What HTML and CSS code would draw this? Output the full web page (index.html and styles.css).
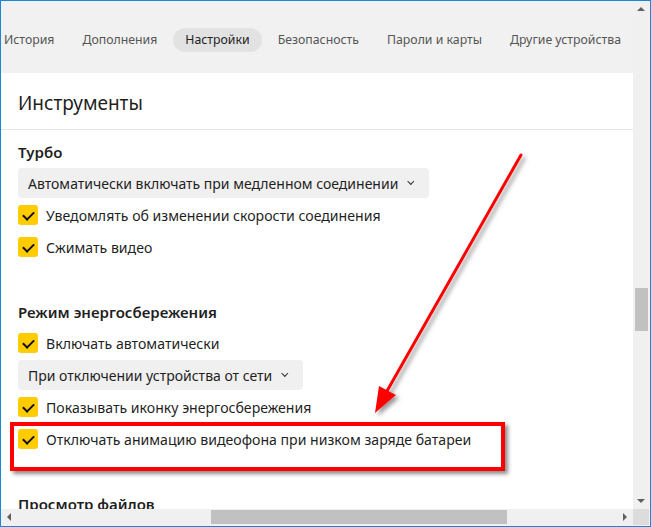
FILE: index.html
```html
<!DOCTYPE html>
<html lang="ru">

<head>
    <meta charset="UTF-8">
    <title>Настройки</title>
    <link rel="stylesheet" href="styles.css">
</head>

<body>
    <div class="window">
        <div class="viewport">
            <nav class="tabs">
                <span class="tab">История</span>
                <span class="tab">Дополнения</span>
                <span class="tab active">Настройки</span>
                <span class="tab">Безопасность</span>
                <span class="tab">Пароли и карты</span>
                <span class="tab">Другие устройства</span>
            </nav>

            <main class="panel">
                <h1 class="panel-title">Инструменты</h1>

                <!-- Turbo -->
                <section class="group">
                    <h2>Турбо</h2>
                    <div class="select">Автоматически включать при медленном соединении <span class="chev"></span></div>
                    <label class="check"><span class="box"></span>Уведомлять об изменении скорости соединения</label>
                    <label class="check"><span class="box"></span>Сжимать видео</label>
                </section>

                <!-- Power saving -->
                <section class="group">
                    <h2>Режим энергосбережения</h2>
                    <label class="check"><span class="box"></span>Включать автоматически</label>
                    <div class="select">При отключении устройства от сети <span class="chev"></span></div>
                    <label class="check"><span class="box"></span>Показывать иконку энергосбережения</label>
                    <label class="check marked"><span class="box"></span>Отключать анимацию видеофона при низком заряде батареи</label>
                </section>

                <section class="group">
                    <h2>Просмотр файлов</h2>
                </section>
            </main>

            <svg class="pointer" width="200" height="290" viewBox="0 0 200 290">
                <defs>
                    <filter id="shade" x="-20%" y="-20%" width="140%" height="140%">
                        <feDropShadow dx="3" dy="3" stdDeviation="2" flood-color="#555" flood-opacity="0.6" />
                    </filter>
                </defs>
                <g filter="url(#shade)">
                    <line x1="154" y1="11" x2="20" y2="247" stroke="#f00" stroke-width="3" stroke-linecap="round" />
                    <polygon points="8,269 29,251 12,242" fill="#f00" />
                </g>
            </svg>
        </div>

        <div class="vscroll">
            <span class="arrow up"></span>
            <div class="vtrack"><span class="vthumb"></span></div>
            <span class="arrow down"></span>
        </div>
        <div class="hscroll">
            <span class="arrow left"></span>
            <div class="htrack"><span class="hthumb"></span></div>
            <span class="arrow right"></span>
        </div>
        <div class="corner"></div>
    </div>
</body>

</html>
```

FILE: styles.css
```css
* {
    box-sizing: border-box;
}

body {
    margin: 0;
    font-family: "Noto Sans", "Open Sans", sans-serif;
    color: #1f1f1f;
}

.window {
    width: 651px;
    height: 527px;
    border: 1px solid #1a86d6;
    background: #f1f1f1;
    display: grid;
    grid-template-columns: 632px 16px;
    grid-template-rows: 508px 16px;
    overflow: hidden;
}

.viewport {
    position: relative;
    overflow: hidden;
    display: flex;
    flex-direction: column;
}

/* Tabs */
.tabs {
    flex: none;
    height: 72px;
    display: flex;
    align-items: center;
    gap: 4px;
    margin-left: -9px;
    padding-top: 5px;
    white-space: nowrap;
}

.tab {
    font-size: 12.3px;
    color: #555;
    padding: 0 12px;
    height: 24px;
    line-height: 24px;
    border-radius: 12px;
}

.tab.active {
    background: #e2e2e2;
    color: #222;
}

/* Panel */
.panel {
    flex: none;
    background: #fff;
}

.panel-title {
    margin: 0;
    height: 57px;
    padding: 16px 17px 0;
    font-size: 19px;
    font-weight: 400;
    line-height: 28px;
    border-bottom: 1px solid #e5e5e5;
}

.group {
    padding: 12px 17px 0;
    margin-bottom: 27px;
}

.group h2 {
    margin: 0 0 6px;
    font-size: 15px;
    font-weight: 600;
    line-height: 20px;
}

.group h2 + .check {
    margin-top: -1px;
}

.select {
    display: inline-flex;
    align-items: center;
    gap: 11px;
    height: 30px;
    margin: 0 0 1px;
    padding: 0 15px 0 10px;
    background: #f0f0f0;
    border-radius: 4px;
    font-size: 14px;
    white-space: nowrap;
}

.check + .select {
    margin-top: 1px;
}

.chev {
    width: 5px;
    height: 5px;
    border-right: 1.5px solid #333;
    border-bottom: 1.5px solid #333;
    transform: rotate(45deg) translate(-2px, -1px);
}

.check {
    position: relative;
    display: flex;
    align-items: center;
    gap: 8px;
    height: 32px;
    font-size: 14.1px;
    white-space: nowrap;
}

.box {
    flex: none;
    width: 20px;
    height: 20px;
    border-radius: 3px;
    background: #fc0;
    position: relative;
}

.box::after {
    content: "";
    position: absolute;
    left: 7px;
    top: 4px;
    width: 5px;
    height: 9px;
    border-right: 2px solid #111;
    border-bottom: 2px solid #111;
    transform: rotate(45deg);
}

/* Red annotation frame */
.check.marked::after {
    content: "";
    position: absolute;
    left: -8px;
    top: -1px;
    width: 487px;
    height: 41px;
    border: 4px solid #f00;
    box-shadow: 3px 3px 4px rgba(0, 0, 0, .45);
}

.pointer {
    position: absolute;
    left: 366px;
    top: 143px;
    overflow: visible;
}

/* Scrollbars */
.vscroll,
.hscroll {
    background: #f0f0f0;
    display: flex;
    align-items: center;
}

.vscroll {
    flex-direction: column;
}

.vtrack {
    flex: 1;
    width: 100%;
    position: relative;
}

.vthumb {
    position: absolute;
    left: 2px;
    right: 1px;
    top: 271px;
    height: 43px;
    background: #c1c1c1;
}

.htrack {
    flex: 1;
    height: 100%;
    position: relative;
}

.hthumb {
    position: absolute;
    top: 1px;
    bottom: 1px;
    left: 194px;
    width: 296px;
    background: #c1c1c1;
}

.arrow {
    width: 16px;
    height: 16px;
    flex: none;
    position: relative;
}

.arrow::after {
    content: "";
    position: absolute;
    left: 50%;
    top: 50%;
    width: 0;
    height: 0;
    border: 4px solid transparent;
}

.arrow.up::after {
    border-bottom-color: #606060;
    transform: translate(-50%, -75%);
}

.arrow.down::after {
    border-top-color: #606060;
    transform: translate(-50%, -25%);
}

.arrow.left::after {
    border-right-color: #606060;
    transform: translate(-75%, -50%);
}

.arrow.right::after {
    border-left-color: #606060;
    transform: translate(-25%, -50%);
}

.corner {
    background: #dcdcdc;
}
```
